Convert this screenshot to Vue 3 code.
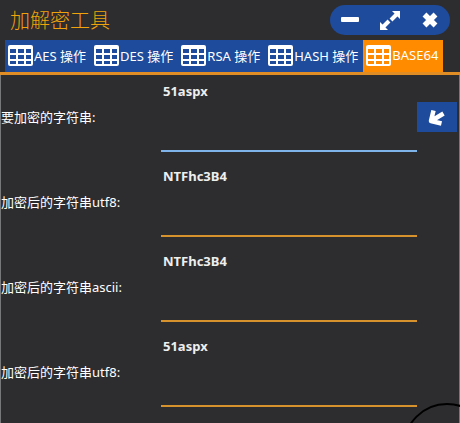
<template>
  <div class="window">
    <header class="title-bar">
      <h1>加解密工具</h1>
      <div class="win-btns">
        <button type="button" aria-label="最小化">
          <svg width="20" height="20" viewBox="0 0 20 20">
            <rect x="1" y="7" width="18" height="5" rx="1" fill="#fff" />
          </svg>
        </button>
        <button type="button" aria-label="最大化">
          <svg width="20" height="20" viewBox="0 0 20 20">
            <path d="M12 1h8v8zM0 12v8h8z" fill="#fff" />
            <path d="M17 4l-6 6M9 11l-6 6" stroke="#fff" stroke-width="4" />
          </svg>
        </button>
        <button type="button" aria-label="关闭">
          <svg width="20" height="20" viewBox="0 0 20 20">
            <path d="M4.5 4.5l11 11M15.5 4.5l-11 11" stroke="#fff" stroke-width="5.5" />
          </svg>
        </button>
      </div>
    </header>
    <nav class="tabs">
      <button
        v-for="tab in tabs"
        :key="tab"
        type="button"
        class="tab"
        :class="{ active: tab === current }"
        @click="current = tab"
      >
        <svg width="25" height="21" viewBox="0 0 25 21">
          <path
            fill="#fff"
            fill-rule="evenodd"
            d="M2 0h21a2 2 0 0 1 2 2v17a2 2 0 0 1-2 2h-21a2 2 0 0 1-2-2v-17a2 2 0 0 1 2-2zM2 4v4h6v-4zM10 4v4h6v-4zM18 4v4h5v-4zM2 10v4h6v-4zM10 10v4h6v-4zM18 10v4h5v-4zM2 16v3h6v-3zM10 16v3h6v-3zM18 16v3h5v-3z"
          />
        </svg>
        <span>{{ tab }}</span>
      </button>
    </nav>
    <main class="panel">
      <div v-for="row in rows" :key="row.id" class="row">
        <label :for="row.id">{{ row.label }}</label>
        <textarea
          :id="row.id"
          v-model="row.value"
          :class="{ source: row.source }"
          spellcheck="false"
        ></textarea>
        <button v-if="row.source" type="button" class="run-btn" aria-label="加密">
          <svg width="18" height="18" viewBox="0 0 18 18">
            <path
              d="M5.5 2.5L3 13L13.5 15.5M4 12.5L15.5 5.5"
              fill="none"
              stroke="#fff"
              stroke-width="4.5"
              stroke-linejoin="round"
            />
          </svg>
        </button>
      </div>
    </main>
    <!-- 右下角装饰圆 -->
    <div class="ring"></div>
  </div>
</template>
<script setup>
import { ref, reactive } from 'vue'
const tabs = ['AES 操作', 'DES 操作', 'RSA 操作', 'HASH 操作', 'BASE64']
const current = ref('BASE64')
const rows = reactive([
  { id: 'source', label: '要加密的字符串:', value: '51aspx', source: true },
  { id: 'utf8', label: '加密后的字符串utf8:', value: 'NTFhc3B4' },
  { id: 'ascii', label: '加密后的字符串ascii:', value: 'NTFhc3B4' },
  { id: 'decoded', label: '加密后的字符串utf8:', value: '51aspx' }
])
</script>
<style>
body {
  background: #2d2d30;
}
</style>
<style scoped>
.window {
  position: relative;
  display: flex;
  flex-direction: column;
  min-height: 100vh;
  overflow: hidden;
  background: #2d2d30;
  color: #fff;
  font-family: 'Noto Sans', 'Noto Sans CJK SC', sans-serif;
  font-size: 13px;
}

button {
  border: none;
  padding: 0;
  color: #fff;
  font: inherit;
  background: #1e4b9b;
  cursor: pointer;
}

svg {
  display: block;
  flex: none;
}

.title-bar {
  display: flex;
  align-items: center;
  justify-content: space-between;
  height: 40px;
  padding: 0 10px;
}

h1 {
  margin: 0;
  padding-bottom: 2px;
  font-size: 20px;
  font-weight: 300;
  color: #f0a30a;
}

.win-btns {
  display: flex;
  align-items: center;
  justify-content: space-between;
  width: 100px;
  height: 30px;
  padding: 0 10px;
  border-radius: 15px;
  background: #1e4b9b;
}

.tabs {
  display: flex;
  padding: 0 5px;
  border-bottom: 3px solid #e18d26;
}

.tab {
  display: flex;
  align-items: center;
  gap: 1px;
  height: 32px;
  padding: 0 5px 2px 3px;
  white-space: nowrap;
}

.tab.active {
  background: #ff8c00;
}

.panel {
  flex: 1;
  display: flex;
  flex-direction: column;
  gap: 15px;
  padding-top: 7px;
  border: solid #77787a;
  border-width: 0 1px;
}

.row {
  display: grid;
  grid-template-columns: 160px 1fr 42px;
  align-items: center;
}

label {
  padding-bottom: 2px;
}

textarea {
  display: block;
  box-sizing: border-box;
  width: 100%;
  height: 70px;
  padding: 0 2px;
  border: none;
  border-bottom: 2px solid #d6922c;
  outline: none;
  resize: none;
  background: transparent;
  color: #eee;
  font: bold 13px/18px 'Noto Sans', 'Noto Sans CJK SC', sans-serif;
}

textarea.source {
  border-bottom-color: #7eb4ea;
}

.run-btn {
  display: flex;
  align-items: center;
  justify-content: center;
  width: 40px;
  height: 30px;
}

.ring {
  position: absolute;
  right: -31px;
  bottom: -68px;
  width: 84px;
  height: 84px;
  border: 2px solid #000;
  border-radius: 50%;
}
</style>
